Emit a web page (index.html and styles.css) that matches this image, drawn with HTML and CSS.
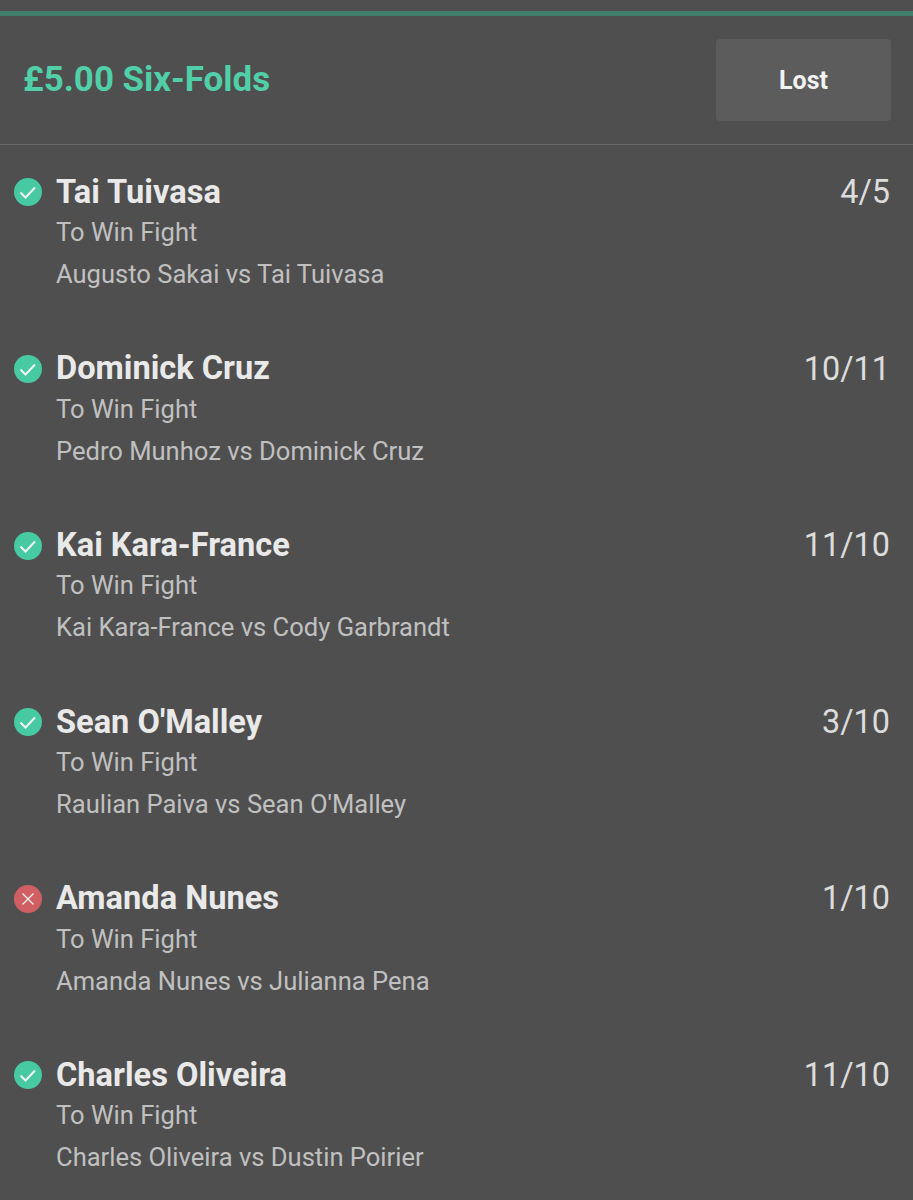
FILE: index.html
```html
<!DOCTYPE html>
<html lang="en">
<head>
<meta charset="utf-8">
<title>Six-Folds</title>
<link rel="stylesheet" href="styles.css">
</head>
<body>
<div class="topbar"></div>
<header class="head">
  <h1 class="title">£5.00 Six-Folds</h1>
  <div class="status">Lost</div>
</header>
<main class="list">
  <section class="leg">
    <svg class="icon" viewBox="0 0 28 28"><circle class="win" cx="14" cy="14" r="14"/><path class="mark" d="M6.5 14.5l5 5 9.5-10"/></svg>
    <div class="info"><div class="name">Tai Tuivasa</div><div class="market">To Win Fight</div><div class="fight">Augusto Sakai vs Tai Tuivasa</div></div>
    <div class="odds">4/5</div>
  </section>
  <section class="leg">
    <svg class="icon" viewBox="0 0 28 28"><circle class="win" cx="14" cy="14" r="14"/><path class="mark" d="M6.5 14.5l5 5 9.5-10"/></svg>
    <div class="info"><div class="name">Dominick Cruz</div><div class="market">To Win Fight</div><div class="fight">Pedro Munhoz vs Dominick Cruz</div></div>
    <div class="odds">10/11</div>
  </section>
  <section class="leg">
    <svg class="icon" viewBox="0 0 28 28"><circle class="win" cx="14" cy="14" r="14"/><path class="mark" d="M6.5 14.5l5 5 9.5-10"/></svg>
    <div class="info"><div class="name">Kai Kara-France</div><div class="market">To Win Fight</div><div class="fight">Kai Kara-France vs Cody Garbrandt</div></div>
    <div class="odds">11/10</div>
  </section>
  <section class="leg">
    <svg class="icon" viewBox="0 0 28 28"><circle class="win" cx="14" cy="14" r="14"/><path class="mark" d="M6.5 14.5l5 5 9.5-10"/></svg>
    <div class="info"><div class="name">Sean O'Malley</div><div class="market">To Win Fight</div><div class="fight">Raulian Paiva vs Sean O'Malley</div></div>
    <div class="odds">3/10</div>
  </section>
  <section class="leg">
    <svg class="icon" viewBox="0 0 28 28"><circle class="loss" cx="14" cy="14" r="14"/><path class="cross" d="M8.5 8.5l11 11M19.5 8.5l-11 11"/></svg>
    <div class="info"><div class="name">Amanda Nunes</div><div class="market">To Win Fight</div><div class="fight">Amanda Nunes vs Julianna Pena</div></div>
    <div class="odds">1/10</div>
  </section>
  <section class="leg">
    <svg class="icon" viewBox="0 0 28 28"><circle class="win" cx="14" cy="14" r="14"/><path class="mark" d="M6.5 14.5l5 5 9.5-10"/></svg>
    <div class="info"><div class="name">Charles Oliveira</div><div class="market">To Win Fight</div><div class="fight">Charles Oliveira vs Dustin Poirier</div></div>
    <div class="odds">11/10</div>
  </section>
</main>
</body>
</html>
```
FILE: styles.css
```css
* { box-sizing: border-box; }
html, body { margin: 0; padding: 0; }
body {
  width: 913px;
  height: 1200px;
  overflow: hidden;
  background: #4f4f4f;
  font-family: Roboto, "Liberation Sans", sans-serif;
}
.topbar {
  height: 16px;
  border-bottom: 5px solid #3f7f6b;
}
.head {
  height: 129px;
  padding: 23px 22px 23px 24px;
  display: flex;
  align-items: flex-start;
  justify-content: space-between;
  border-bottom: 1px solid #676767;
}
.title {
  margin: 1px 0 0 -1px;
  height: 81px;
  line-height: 80px;
  font-size: 34.9px;
  font-weight: 700;
  color: #50cfa8;
}
.status {
  width: 175px;
  height: 82px;
  background: #5c5c5c;
  border-radius: 4px;
  display: flex;
  align-items: center;
  justify-content: center;
  color: #f2f2f2;
  font-size: 25px;
  font-weight: 700;
}
.list {
  display: flex;
  flex-direction: column;
  padding: 28px 23px 0 14px;
}
.leg {
  height: 176.6px;
  flex: none;
  display: flex;
  align-items: flex-start;
}
.icon {
  width: 28px;
  height: 28px;
  flex: none;
  margin: 5.4px 14px 0 0;
}
.win { fill: #47c9a2; }
.loss { fill: #cf5f62; }
.mark { fill: none; stroke: #f2f2f2; stroke-width: 2; }
.cross { fill: none; stroke: #f2f2f2; stroke-width: 1.3; }
.info { flex: 1; }
.name {
  font-size: 32.6px;
  font-weight: 700;
  line-height: 38px;
  margin-top: -0.2px;
  color: #e9e9e9;
}
.market {
  font-size: 25.55px;
  line-height: 30px;
  margin-top: 6.35px;
  color: #c0c0c0;
}
.fight {
  font-size: 25.55px;
  line-height: 30px;
  margin-top: 12px;
  color: #c0c0c0;
}
.odds {
  font-size: 32.4px;
  line-height: 38px;
  margin-top: 0.1px;
  color: #dcdcdc;
}
```
